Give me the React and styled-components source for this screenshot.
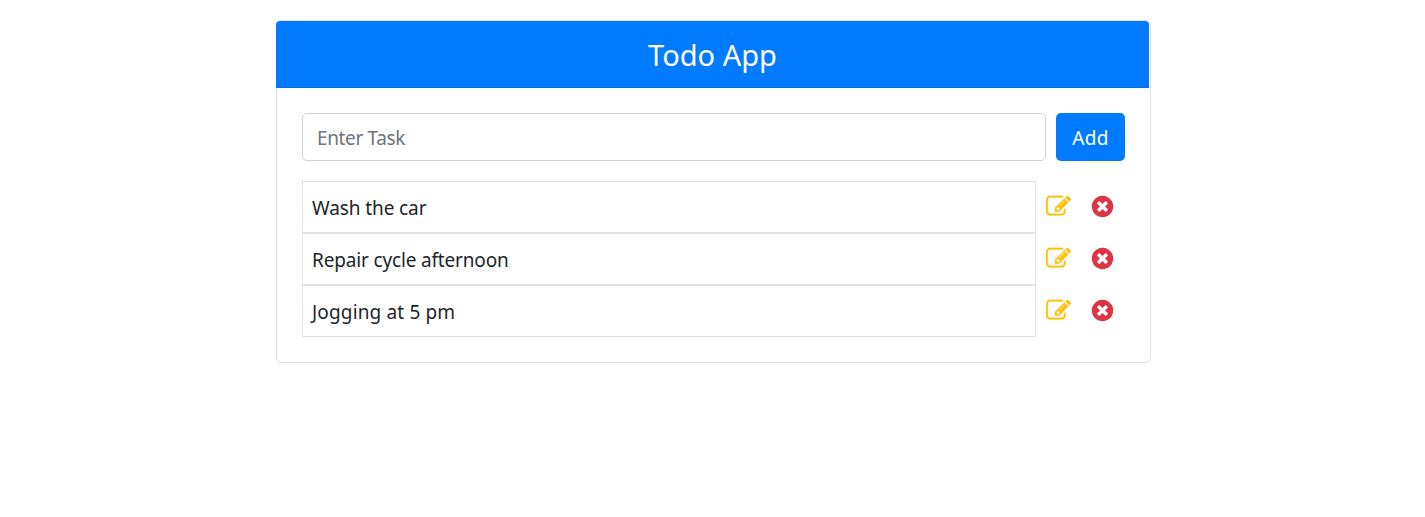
import React from "react";
import styled, { createGlobalStyle } from "styled-components";

const GlobalStyle = createGlobalStyle`
  * { box-sizing: border-box; }
  body {
    margin: 0;
    background: #fff;
    color: #212529;
    font-family: "Segoe UI", "Noto Sans", sans-serif;
    font-size: 19px;
  }
`;

const Card = styled.main`
  width: 875px;
  height: 343px;
  margin: 20px 0 0 276px;
  border: 1px solid #dfdfdf;
  border-radius: 5px;
`;

const Header = styled.header`
  display: flex;
  align-items: center;
  justify-content: center;
  height: 67px;
  margin: 0 1px 0 -1px;
  padding-top: 1px;
  background: #007bff;
  border-bottom: 1px solid #006fe6;
  border-radius: 4px 4px 0 0;
`;

const Title = styled.h1`
  margin: 0;
  color: #fff;
  font-size: 29px;
  font-weight: 400;
  line-height: 36px;
`;

const Body = styled.div`
  padding: 25px;
`;

const Form = styled.form`
  display: flex;
  gap: 10px;
  height: 48px;
  margin-bottom: 20px;
`;

const TaskInput = styled.input`
  width: 744px;
  padding: 2px 14px 0;
  border: 1px solid #ced4da;
  border-radius: 5px;
  color: #495057;
  font: inherit;
  letter-spacing: -0.35px;
  outline: none;
  &::placeholder { color: #6c757d; opacity: 1; }
`;

const AddButton = styled.button`
  width: 69px;
  padding: 2px 0 0;
  border: 0;
  border-radius: 5px;
  background: #007bff;
  color: #fff;
  font: inherit;
  letter-spacing: 0.3px;
`;

const List = styled.ul`
  margin: 0;
  padding: 0;
  list-style: none;
`;

const Row = styled.li`
  display: flex;
  height: 52px;
`;

const TaskText = styled.div`
  width: 734px;
  padding: 1px 9px 0;
  border: 1px solid #e2e2e2;
  line-height: 50px;
  letter-spacing: ${(p) => p.$spacing}px;
`;

const IconButton = styled.button`
  display: flex;
  margin: ${(p) => p.$margin};
  padding: 0;
  border: 0;
  background: none;
  color: ${(p) => p.$color};
  align-self: flex-start;
`;

const Icon = styled.svg`
  display: block;
  width: 25px;
  height: 25px;
  fill: currentColor;
`;

const EditIcon = () => (
  <Icon viewBox="0 0 1792 1792" stroke="currentColor" strokeWidth="16" aria-hidden="true">
    <path d="M888 1184l116-116-152-152-116 116v56h96v96h56zm440-720q-16-16-33 1l-350 350q-17 17-1 33t33-1l350-350q17-17 1-33zm80 594v190q0 119-84.5 203.5t-203.5 84.5h-832q-119 0-203.5-84.5t-84.5-203.5v-832q0-119 84.5-203.5t203.5-84.5h832q63 0 117 25 15 7 18 23 3 17-9 29l-49 49q-14 14-32 8-23-6-45-6h-832q-66 0-113 47t-47 113v832q0 66 47 113t113 47h832q66 0 113-47t47-113v-126q0-13 9-22l64-64q15-15 35-7t20 29zm-96-738l288 288-672 672h-288v-288zm444 132l-92 92-288-288 92-92q28-28 68-28t68 28l152 152q28 28 28 68t-28 68z" />
  </Icon>
);

const RemoveIcon = () => (
  <Icon viewBox="0 0 1792 1792" aria-hidden="true">
    <path d="M1277 1122q0-26-19-45l-181-181 181-181q19-19 19-45 0-27-19-46l-90-90q-19-19-46-19-26 0-45 19l-181 181-181-181q-19-19-45-19-27 0-46 19l-90 90q-19 19-19 46 0 26 19 45l181 181-181 181q-19 19-19 45 0 27 19 46l90 90q19 19 46 19 26 0 45-19l181-181 181 181q19 19 45 19 27 0 46-19l90-90q19-19 19-46zm387-226q0 209-103 385.5t-279.5 279.5-385.5 103-385.5-103-279.5-279.5-103-385.5 103-385.5 279.5-279.5 385.5-103 385.5 103 279.5 279.5 103 385.5z" />
  </Icon>
);

const tasks = [
  { text: "Wash the car", spacing: -0.1 },
  { text: "Repair cycle afternoon", spacing: -0.16 },
  { text: "Jogging at 5 pm", spacing: 0.15 },
];

export default function App() {
  return (
    <>
      <GlobalStyle />
      <Card>
        <Header>
          <Title>Todo App</Title>
        </Header>
        <Body>
          <Form onSubmit={(e) => e.preventDefault()}>
            <TaskInput placeholder="Enter Task" />
            <AddButton>Add</AddButton>
          </Form>
          <List>
            {tasks.map(({ text, spacing }) => (
              <Row key={text}>
                <TaskText $spacing={spacing}>{text}</TaskText>
                <IconButton $color="#ffc107" $margin="13px 0 0 10px" aria-label="Edit">
                  <EditIcon />
                </IconButton>
                <IconButton $color="#dc3545" $margin="13px 0 0 19px" aria-label="Remove">
                  <RemoveIcon />
                </IconButton>
              </Row>
            ))}
          </List>
        </Body>
      </Card>
    </>
  );
}
